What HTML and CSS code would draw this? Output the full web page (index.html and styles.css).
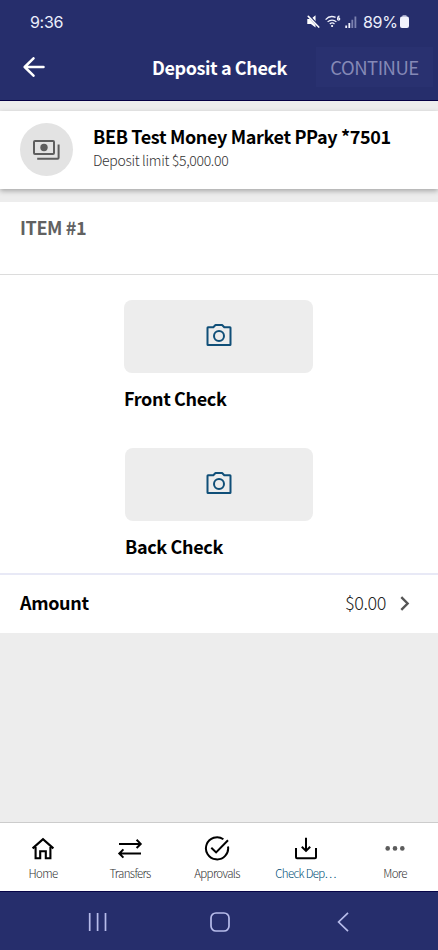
FILE: index.html
```html
<!DOCTYPE html>
<html lang="en">
<head>
<meta charset="utf-8">
<meta name="viewport" content="width=device-width, initial-scale=1">
<title>Deposit a Check</title>
<link rel="stylesheet" href="styles.css">
</head>
<body>
<div class="screen">
  <header class="top">
    <div class="status">
      <span class="clock">9:36</span>
      <div class="indicators">
        <svg width="13" height="13" viewBox="0 0 14 14"><path d="M.3 4.4h3.9L9.2.2v13.3L4.2 9.6H.3z" fill="#fff"/><path d="M1.2.3 13 12.8" stroke="#262e6c" stroke-width="3"/><path d="M1.4 1.5 12.6 13" stroke="#fff" stroke-width="1.7" stroke-linecap="round"/></svg>
        <svg class="wifi" width="16" height="13" viewBox="0 0 16 13" fill="none" stroke="#f1f2fc" stroke-width="1.3"><path d="M.6 4.6C3.2 1.6 7.4 1 10.6 2.4M2.6 6.9c2.5-2.5 6.4-2.5 8.8 0M4.8 9c1.4-1.3 3.3-1.3 4.7 0"/><circle cx="7.1" cy="11" r="1.1" fill="#fff" stroke="none"/><path d="M14.4.8c-1.3.6-1.8 1.6-1.8 2.6"/><circle cx="13.6" cy="4" r="1.1"/></svg>
        <svg class="signal" width="12" height="12" viewBox="0 0 12 12"><path d="M.3 9.4h1.8V12H.3zM3.4 7h1.8v5H3.4z" fill="#f1f2fc"/><path d="M6.4 3.8h1.8V12H6.4zM9.5.6h1.8V12H9.5z" fill="#7c82b0"/></svg>
        <span class="percent">89%</span>
        <svg class="battery" width="9" height="13" viewBox="0 0 9 13"><rect x="2.3" width="4.4" height="3" rx="1" fill="#9b9fc5"/><rect y="1.6" width="9" height="11.4" rx="2" fill="#f1f2fc"/></svg>
      </div>
    </div>
    <div class="titlebar">
      <svg class="back" width="22" height="20" viewBox="0 0 22 20" fill="none" stroke="#fff" stroke-width="2.5" stroke-linecap="round" stroke-linejoin="round"><path d="M10.5 1.3 1.7 10l8.8 8.7M2 10h18.5"/></svg>
      <h1 class="title">Deposit a Check</h1>
      <button class="continue" disabled>CONTINUE</button>
    </div>
  </header>

  <main class="content">
    <section class="account">
      <div class="avatar">
        <svg width="27" height="20" viewBox="0 0 27 20" fill="none" stroke="#5e5e5e" stroke-width="2"><rect x="1" y="1" width="20" height="13" rx="1"/><path d="M4.2 18.7h20.4q1 0 1-1V4.4"/><circle cx="11" cy="7.5" r="3.7" fill="#5e5e5e" stroke="none"/></svg>
      </div>
      <div class="account-text">
        <div class="account-name">BEB Test Money Market PPay *7501</div>
        <div class="limit">Deposit limit $5,000.00</div>
      </div>
    </section>

    <section class="item-head">ITEM #1</section>
    <section class="photos">
      <div class="photo front">
        <div class="shot"><svg width="26" height="24" viewBox="0 0 26 24" fill="none" stroke="#104f78" stroke-width="2"><path d="M2 4.2h5.3L9.5 2h6.6l2.2 2.2H24q.5 0 .5.5v16.8q0 .5-.5.5H2q-.5 0-.5-.5V4.7q0-.5.5-.5z" stroke-linejoin="round"/><circle cx="13" cy="13" r="5"/></svg></div>
        <div class="caption">Front Check</div>
      </div>
      <div class="photo rear">
        <div class="shot"><svg width="26" height="24" viewBox="0 0 26 24" fill="none" stroke="#104f78" stroke-width="2"><path d="M2 4.2h5.3L9.5 2h6.6l2.2 2.2H24q.5 0 .5.5v16.8q0 .5-.5.5H2q-.5 0-.5-.5V4.7q0-.5.5-.5z" stroke-linejoin="round"/><circle cx="13" cy="13" r="5"/></svg></div>
        <div class="caption">Back Check</div>
      </div>
    </section>
    <section class="amount">
      <span class="amount-label">Amount</span>
      <span class="amount-value">$0.00</span>
      <svg class="chevron" width="10" height="15" viewBox="0 0 10 15" fill="none" stroke="#555" stroke-width="2.4"><path d="m1.3 1.2 6.3 6.3-6.3 6.3"/></svg>
    </section>
  </main>

  <nav class="tabs">
    <a class="tab"><svg width="24" height="26" viewBox="0 0 24 26" fill="none" stroke="#000" stroke-width="2.1"><path d="M1.6 13.4 12 4.1l10.4 9.3M4.6 12v11.2h4.6v-6.9h5.6v6.9h4.6V12"/></svg><span>Home</span></a>
    <a class="tab"><svg width="26" height="26" viewBox="0 0 26 26" fill="none" stroke="#000" stroke-width="2"><path d="M2 8.9h21.5M19.6 4.8l4.1 4.1-4.1 4.1M24 18.5H2.5M6.4 14.4l-4.1 4.1 4.1 4.1"/></svg><span>Transfers</span></a>
    <a class="tab"><svg width="26" height="26" viewBox="0 0 26 26" fill="none" stroke="#000" stroke-width="2"><path d="M19.4 4.2A11.1 11.1 0 1 0 24 11.5"/><path d="m7.3 12.7 4.8 4.7L24 5.2"/></svg><span>Approvals</span></a>
    <a class="tab active"><svg width="24" height="26" viewBox="0 0 24 26" fill="none" stroke="#000" stroke-width="2"><path d="M2 13.1v9.2q0 1 1 1h18q1 0 1-1v-9.2M12 2.8v12.7M7.8 11.7l4.2 4.2 4.2-4.2"/></svg><span>Check Dep…</span></a>
    <a class="tab"><svg width="22" height="26" viewBox="0 0 22 26" fill="#5c5c5c"><circle cx="3.7" cy="13.4" r="2.3"/><circle cx="11" cy="13.4" r="2.3"/><circle cx="18.3" cy="13.4" r="2.3"/></svg><span>More</span></a>
  </nav>

  <footer class="system">
    <svg width="20" height="20" viewBox="0 0 20 20" stroke="#b7bcea" stroke-width="1.7"><path d="M1.7 1v18M9.6 1v18M17.5 1v18"/></svg>
    <svg width="20" height="20" viewBox="0 0 20 20" fill="none" stroke="#b7bcea" stroke-width="1.7"><rect x="1" y="1" width="18" height="18" rx="5"/></svg>
    <svg width="12" height="20" viewBox="0 0 12 20" fill="none" stroke="#b7bcea" stroke-width="1.7"><path d="M11 .8 1.6 10l9.4 9.2"/></svg>
  </footer>
</div>
</body>
</html>
```
FILE: styles.css
```css
* { box-sizing: border-box; }
body {
  margin: 0;
  font-family: "Noto Sans CJK SC", "Noto Sans", sans-serif;
  color: #000;
  background: #ededed;
}
svg { display: block; flex: none; }
.screen { width: 438px; height: 950px; display: flex; flex-direction: column; overflow: hidden; }

.top { height: 101px; background: #262e6c; border-bottom: 1px solid #050044; color: #fff; }
.status { height: 43px; display: flex; align-items: center; padding: 0 29px 0 30px; font-family: Inter, sans-serif; font-size: 16px; letter-spacing: -.3px; color: #eceefb; }
.indicators { margin-left: auto; display: flex; align-items: center; }
.wifi { margin-left: 5px; }
.signal { margin-left: 4px; }
.percent { margin-left: 6px; width: 35px; white-space: nowrap; }
.battery { margin-left: 2px; }
.titlebar { height: 48px; display: flex; align-items: center; padding-left: 23px; }
.title { margin: 0 0 0 107px; width: 164px; font-size: 18px; font-weight: 700; line-height: 24px; letter-spacing: -.4px; white-space: nowrap; }
.continue { width: 117px; height: 40px; padding: 0; border: 0; background: #293170; color: #8589b6; font: 400 18.5px/38px "Noto Sans CJK SC", sans-serif; letter-spacing: -.5px; }

.content { flex: 1; padding-top: 10px; display: flex; flex-direction: column; }
.account { flex: none; height: 78px; display: flex; background: #fff; padding: 12px 20px; box-shadow: 0 2px 5px rgba(0,0,0,.3); white-space: nowrap; }
.avatar { width: 53px; height: 53px; margin-right: 20px; border-radius: 50%; background: #e3e3e3; display: flex; align-items: center; justify-content: center; }
.account-text { margin-top: -1px; }
.account-name { font-size: 18px; font-weight: 700; line-height: 28px; letter-spacing: -.35px; }
.limit { font-size: 14px; font-weight: 300; line-height: 20px; letter-spacing: -.32px; color: #333; }
.item-head { height: 73px; margin-top: 13px; padding: 11px 20px; background: #fff; border-bottom: 1px solid #dcdcdc; color: #616161; font-size: 18px; font-weight: 700; line-height: 28px; letter-spacing: -.4px; }
.photos { height: 300px; background: #fff; border-bottom: 2px solid #e8e9f6; padding: 25px 0 0 124px; }
.photo { height: 148px; }
.rear { padding-left: 1px; }
.shot { width: 189px; height: 73px; border-radius: 8px; background: #ededed; display: flex; align-items: center; justify-content: center; padding-bottom: 3px; }
.rear .shot { width: 188px; }
.caption { margin-top: 11px; font-size: 18px; font-weight: 700; line-height: 28px; letter-spacing: -.35px; }
.amount { height: 58px; background: #fff; display: flex; align-items: center; padding: 0 28px 1px 20px; }
.amount-label { font-size: 18px; font-weight: 700; letter-spacing: -.35px; padding-bottom: 3px; }
.amount-value { margin-left: auto; font-size: 18px; font-weight: 300; letter-spacing: -.4px; color: #222; padding-bottom: 3px; }
.chevron { margin-left: 14px; }

.tabs { height: 69px; background: #fff; border-top: 1px solid #ccc; display: grid; grid-template-columns: 86px 88px 86px 91px 88px; padding-top: 12px; }
.tab { display: flex; flex-direction: column; align-items: center; font-size: 11.5px; font-weight: 300; line-height: 18px; letter-spacing: -.65px; color: #333; white-space: nowrap; }
.tab span { margin-top: 3px; }
.tab.active { color: #004f78; }
.system { height: 59px; background: #262e6c; border-top: 1px solid #070548; display: flex; align-items: center; padding: 2px 89px 0 88px; justify-content: space-between; }
.system svg:nth-child(2) { margin-right: 5px; }
```
